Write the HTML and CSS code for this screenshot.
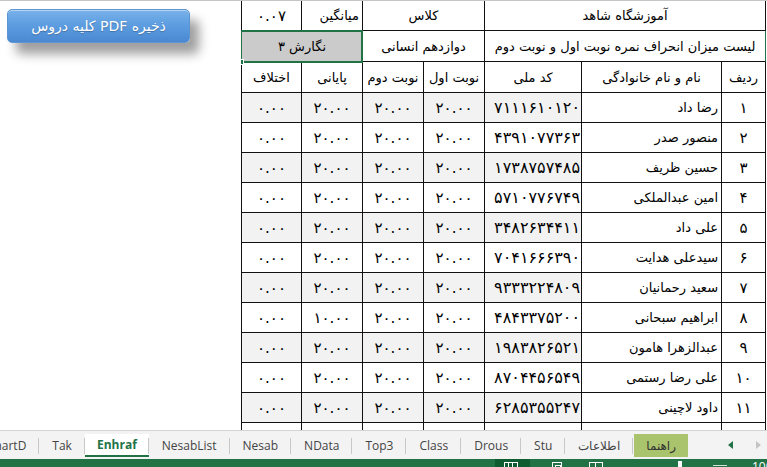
FILE: index.html
```html
<!DOCTYPE html>
<html lang="fa">
<head>
<meta charset="utf-8">
<title>Enhraf</title>
<link rel="stylesheet" href="styles.css">
</head>
<body>
<div class="window">
  <div class="sheet">
    <div class="pane">
      <button class="pdf-btn" type="button" dir="rtl">ذخیره PDF کلیه دروس</button>
    </div>
    <div class="grid-wrap">
      <table class="grid" dir="rtl">
        <colgroup>
          <col class="c-row"><col class="c-name"><col class="c-code"><col class="c-num"><col class="c-num"><col class="c-num"><col class="c-diff">
        </colgroup>
        <tr class="r-top">
          <td colspan="3" class="edge">آموزشگاه شاهد</td>
          <td colspan="2">کلاس</td>
          <td class="right">میانگین</td>
          <td class="num">۰.۰۷</td>
        </tr>
        <tr class="r-top2">
          <td colspan="3" class="edge edge-green title">لیست میزان انحراف نمره نوبت اول و نوبت دوم</td>
          <td colspan="2">دوازدهم انسانی</td>
          <td colspan="2" class="selected">نگارش ۳</td>
        </tr>
        <tr class="r-head">
          <td class="edge">ردیف</td>
          <td>نام و نام خانوادگی</td>
          <td>کد ملی</td>
          <td>نوبت اول</td>
          <td>نوبت دوم</td>
          <td>پایانی</td>
          <td>اختلاف</td>
        </tr>
        <tr class="odd"><td class="edge num">۱</td><td class="name">رضا داد</td><td class="code">۷۱۱۱۶۱۰۱۲۰</td><td class="num">۲۰.۰۰</td><td class="num">۲۰.۰۰</td><td class="num">۲۰.۰۰</td><td class="num">۰.۰۰</td></tr>
        <tr><td class="edge num">۲</td><td class="name">منصور صدر</td><td class="code">۴۳۹۱۰۷۷۳۶۳</td><td class="num">۲۰.۰۰</td><td class="num">۲۰.۰۰</td><td class="num">۲۰.۰۰</td><td class="num">۰.۰۰</td></tr>
        <tr class="odd"><td class="edge num">۳</td><td class="name">حسین ظریف</td><td class="code">۱۷۳۸۷۵۷۴۸۵</td><td class="num">۲۰.۰۰</td><td class="num">۲۰.۰۰</td><td class="num">۲۰.۰۰</td><td class="num">۰.۰۰</td></tr>
        <tr><td class="edge num">۴</td><td class="name">امین عبدالملکی</td><td class="code">۵۷۱۰۷۷۶۷۴۹</td><td class="num">۲۰.۰۰</td><td class="num">۲۰.۰۰</td><td class="num">۲۰.۰۰</td><td class="num">۰.۰۰</td></tr>
        <tr class="odd"><td class="edge num">۵</td><td class="name">علی داد</td><td class="code">۳۴۸۲۶۳۴۴۱۱</td><td class="num">۲۰.۰۰</td><td class="num">۲۰.۰۰</td><td class="num">۲۰.۰۰</td><td class="num">۰.۰۰</td></tr>
        <tr><td class="edge num">۶</td><td class="name">سیدعلی هدایت</td><td class="code">۷۰۴۱۶۶۶۳۹۰</td><td class="num">۲۰.۰۰</td><td class="num">۲۰.۰۰</td><td class="num">۲۰.۰۰</td><td class="num">۰.۰۰</td></tr>
        <tr class="odd"><td class="edge num">۷</td><td class="name">سعید رحمانیان</td><td class="code">۹۳۳۳۲۲۴۸۰۹</td><td class="num">۲۰.۰۰</td><td class="num">۲۰.۰۰</td><td class="num">۲۰.۰۰</td><td class="num">۰.۰۰</td></tr>
        <tr><td class="edge num">۸</td><td class="name">ابراهیم سبحانی</td><td class="code">۴۸۴۳۳۷۵۲۰۰</td><td class="num">۲۰.۰۰</td><td class="num">۲۰.۰۰</td><td class="num">۱۰.۰۰</td><td class="num">۰.۰۰</td></tr>
        <tr class="odd"><td class="edge num">۹</td><td class="name">عبدالزهرا هامون</td><td class="code">۱۹۸۳۸۲۶۵۲۱</td><td class="num">۲۰.۰۰</td><td class="num">۲۰.۰۰</td><td class="num">۲۰.۰۰</td><td class="num">۰.۰۰</td></tr>
        <tr><td class="edge num">۱۰</td><td class="name">علی رضا رستمی</td><td class="code">۸۷۰۴۴۵۶۵۴۹</td><td class="num">۲۰.۰۰</td><td class="num">۲۰.۰۰</td><td class="num">۲۰.۰۰</td><td class="num">۰.۰۰</td></tr>
        <tr class="odd"><td class="edge num">۱۱</td><td class="name">داود لاچینی</td><td class="code">۶۲۸۵۳۵۵۲۴۷</td><td class="num">۲۰.۰۰</td><td class="num">۲۰.۰۰</td><td class="num">۲۰.۰۰</td><td class="num">۰.۰۰</td></tr>
        <tr><td class="edge"></td><td></td><td></td><td></td><td></td><td></td><td></td></tr>
      </table>
      <span class="dropdown" aria-hidden="true"></span>
      <span class="fill-handle" aria-hidden="true"></span>
    </div>
  </div>

  <div class="tabs" dir="rtl">
    <div class="tab-nav">
      <span class="nav-prev"></span>
      <span class="nav-next"></span>
    </div>
    <div class="tab-list">
      <span class="tab tab-help">راهنما</span>
      <span class="tab">اطلاعات</span>
      <span class="tab">Stu</span>
      <span class="tab">Drous</span>
      <span class="tab">Class</span>
      <span class="tab">Top3</span>
      <span class="tab">NData</span>
      <span class="tab">Nesab</span>
      <span class="tab">NesabList</span>
      <span class="tab active">Enhraf</span>
      <span class="tab">Tak</span>
      <span class="tab">ChartD</span>
    </div>
  </div>

  <div class="status">
    <span class="view view-normal"><i class="ico-grid"></i></span>
    <span class="view"><i class="ico-page"></i></span>
    <span class="view"><i class="ico-break"></i></span>
    <span class="zoom-thumb"></span>
    <span class="zoom-track"></span>
    <span class="zoom-pct">100%</span>
  </div>
</div>
</body>
</html>
```

FILE: styles.css
```css
* { box-sizing: border-box; }

html, body {
  margin: 0;
  padding: 0;
}

body {
  width: 767px;
  height: 467px;
  overflow: hidden;
  background: #fff;
  font-family: "DejaVu Sans", sans-serif;
}

.window {
  display: flex;
  flex-direction: column;
  height: 467px;
  border-top: 1px solid #c6c6c6;
}

/* worksheet area */
.sheet {
  display: flex;
  height: 429px;
  flex: none;
  overflow: hidden;
}

.pane {
  width: 241px;
  flex: none;
  padding: 8px 0 0 7px;
}

.pdf-btn {
  display: block;
  width: 183px;
  height: 34px;
  border: 1px solid #5d95d2;
  border-radius: 5px;
  background: linear-gradient(#79b2ea 0%, #5d9de0 45%, #4a89d2 100%);
  box-shadow: inset 0 1px 0 rgba(255,255,255,0.45), 9px 11px 11px rgba(0,0,0,0.38);
  color: #fff;
  font-family: "DejaVu Sans", sans-serif;
  font-size: 14px;
  padding: 0;
  text-shadow: 0 1px 1px rgba(0,0,0,0.25);
}

.grid-wrap {
  position: relative;
  flex: 1;
  overflow: hidden;
}

.grid {
  border-collapse: separate;
  border-spacing: 0;
  table-layout: fixed;
  width: 525px;
  font-size: 13px;
  color: #000;
}

.c-row  { width: 45px; }
.c-name { width: 140px; }
.c-code { width: 97px; }
.c-num  { width: 61px; }
.c-diff { width: 60px; }

.grid td {
  border-left: 1px solid #111;
  border-bottom: 1px solid #111;
  text-align: center;
  vertical-align: middle;
  padding: 0 3px;
  height: 30px;
  white-space: nowrap;
  overflow: hidden;
}

.grid td.edge { border-right: 1px solid #111; }
.grid td.edge-green { border-right-color: #217346; }

.grid tr.r-top td { height: 30px; }
.grid tr.r-top2 td,
.grid tr.r-head td { height: 31px; }

.grid td.right { text-align: right; }
.grid td.title { padding: 0 2px; }

.grid td.name { text-align: right; }

/* Persian digits are set a little larger and looser */
.grid td.num {
  font-size: 15px;
  letter-spacing: 1px;
}
.grid td.code {
  font-size: 16px;
  letter-spacing: 1.4px;
  text-align: right;
  padding: 0 1px 0 0;
}

/* banded rows: every other row shaded, except name and index columns */
.grid tr.odd td { background: #f2f2f2; }
.grid tr.odd td.edge,
.grid tr.odd td.name { background: #fff; }

.grid td.selected {
  background: #cbcbcb;
  outline: 2px solid #217346;
  outline-offset: -1px;
}

.dropdown {
  position: absolute;
  left: -18px;
  top: 48px;
  width: 14px;
  height: 12px;
  border: 1px solid #ababab;
  background: #fff;
}
.dropdown::after {
  content: "";
  position: absolute;
  left: 3px;
  top: 4px;
  border-left: 3px solid transparent;
  border-right: 3px solid transparent;
  border-top: 3px solid #444;
}

.fill-handle {
  position: absolute;
  left: -3px;
  top: 58px;
  width: 6px;
  height: 6px;
  background: #217346;
  border: 1px solid #fff;
}

/* sheet tabs */
.tabs {
  display: flex;
  height: 29px;
  flex: none;
  background: #f3f3f3;
  border-top: 1px solid #d4d4d4;
  font-family: "Open Sans", sans-serif;
  font-size: 12px;
  color: #444;
}

.tab-nav {
  width: 79px;
  flex: none;
  position: relative;
}
.nav-prev {
  position: absolute;
  right: 34px;
  top: 10px;
  border-top: 4px solid transparent;
  border-bottom: 4px solid transparent;
  border-right: 5px solid #217346;
}
.nav-next {
  position: absolute;
  right: 6px;
  top: 10px;
  border-top: 4px solid transparent;
  border-bottom: 4px solid transparent;
  border-left: 5px solid #c4c4c4;
}

.tab-list {
  flex: 1;
  display: flex;
  overflow: hidden;
  padding-top: 3px;
}

.tab {
  flex: none;
  display: flex;
  align-items: center;
  height: 23px;
  padding: 0 13px;
  position: relative;
  white-space: nowrap;
}
.tab + .tab::after {
  content: "";
  position: absolute;
  right: 0;
  top: 4px;
  height: 16px;
  border-right: 1px solid #c8c8c8;
}

.tab-help {
  background: #a9c46c;
  color: #333;
  font-family: "DejaVu Sans", sans-serif;
  padding: 0 12px;
  margin-left: 1px;
}

.tab.active {
  background: #fff;
  color: #217346;
  font-weight: bold;
  padding: 0 12px;
  border-bottom: 2px solid #217346;
}

/* status bar */
.status {
  flex: 1;
  background: #217346;
  position: relative;
  display: flex;
  align-items: flex-start;
}

.view {
  width: 35px;
  height: 8px;
  position: relative;
  flex: none;
}
.view-normal {
  margin-left: 495px;
  background: #0e5c30;
}
.view + .view { margin-left: 10px; }

.view i {
  position: absolute;
  top: 3px;
  left: 9px;
  width: 14px;
  height: 6px;
  border: 1px solid #fff;
  border-bottom: 0;
}
.ico-grid {
  background:
    linear-gradient(90deg, transparent 3px, #fff 3px, #fff 4px, transparent 4px, transparent 7px, #fff 7px, #fff 8px, transparent 8px);
}
.view i.ico-page { left: 12px; width: 10px; }
.ico-page::after {
  content: "";
  position: absolute;
  left: 2px;
  top: 2px;
  width: 4px;
  height: 4px;
  border: 1px solid #fff;
  border-bottom: 0;
}
.view i.ico-break { left: 4px; }
.ico-break {
  background: linear-gradient(90deg, transparent 5px, #fff 5px, #fff 6px, transparent 6px);
}

.zoom-thumb {
  position: absolute;
  left: 678px;
  top: 2px;
  width: 4px;
  height: 8px;
  background: #fff;
}
.zoom-track {
  position: absolute;
  left: 713px;
  top: 6px;
  width: 14px;
  height: 1px;
  background: #cfe3d7;
}
.zoom-pct {
  position: absolute;
  left: 752px;
  top: 1px;
  color: #fff;
  font-family: "Open Sans", sans-serif;
  font-size: 12px;
  line-height: 14px;
}
```
